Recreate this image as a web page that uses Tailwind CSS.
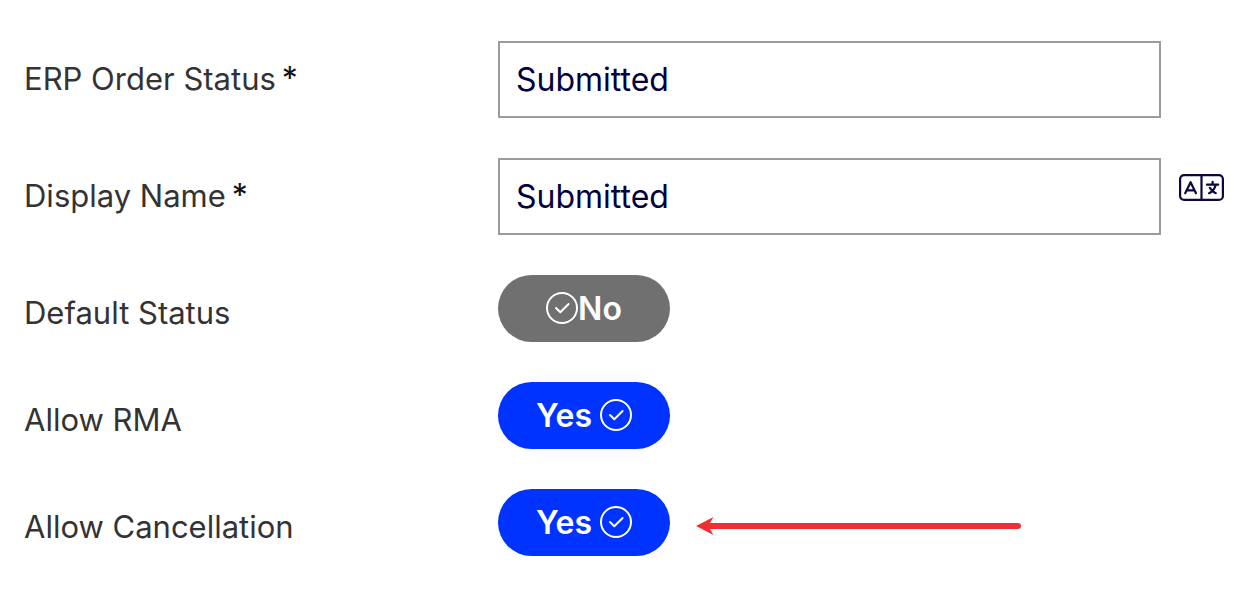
<!DOCTYPE html>
<html lang="en">
<head>
  <meta charset="UTF-8">
  <meta name="viewport" content="width=device-width, initial-scale=1.0">
  <title>ERP Order Status</title>
  <script src="https://cdn.jsdelivr.net/npm/@tailwindcss/browser@4"></script>
</head>
<body class="bg-white font-['Inter',sans-serif] text-[32px] leading-12 text-[#333333]">
  <form class="flex flex-col gap-10 pt-[41px] pr-8 pb-10 pl-6">
    <div class="flex items-start">
      <label for="erpStatus" class="flex w-[39.5%] shrink-0 gap-1.5 pt-3.5 text-[31px]">ERP Order Status<span class="text-[32px] text-[#111111]">*</span></label>
      <div class="flex min-w-0 flex-1 pr-[63px]">
        <input id="erpStatus" type="text" value="Submitted" required class="h-[77px] w-full border-2 border-[#9b9b9b] px-4 text-[#02003d] outline-none focus:border-[#0033ff]">
      </div>
    </div>

    <div class="flex items-start">
      <label for="displayName" class="flex w-[39.5%] shrink-0 gap-1.5 pt-3.5 text-[31px]">Display Name<span class="text-[32px] text-[#111111]">*</span></label>
      <div class="flex min-w-0 flex-1 items-start gap-[18px]">
        <input id="displayName" type="text" value="Submitted" required class="h-[77px] min-w-0 flex-1 border-2 border-[#9b9b9b] px-4 text-[#02003d] outline-none focus:border-[#0033ff]">
        <button type="button" aria-label="Translate" class="mt-4 shrink-0 text-[#0b083f]">
          <svg width="45" height="27" viewBox="0 0 45 27" fill="none" stroke="currentColor" stroke-width="2.2" stroke-linecap="round" stroke-linejoin="round">
            <rect x="1.100" y="1.100" width="42.800" height="24.800" rx="4"/>
            <path d="M22.500 1v25"/>
            <path d="M6.200 19.200L11.600 8.200L17 19.200M8 16.400h7.200"/>
            <path d="M28 10.700h11.200M33.600 7.800v2.900M36.700 11c-1 3.900-3.300 6.700-6.600 8.200M30.800 13.800c1.300 2.500 3.500 4.400 6 5.400"/>
          </svg>
        </button>
      </div>
    </div>

    <div class="flex items-start">
      <span id="defaultLabel" class="w-[39.5%] shrink-0 pt-3.5 text-[31px]">Default Status</span>
      <button type="button" role="switch" aria-checked="false" aria-labelledby="defaultLabel" class="flex h-[67px] w-[172px] items-center justify-center rounded-full bg-[#707070] font-semibold text-white">
        <svg class="mb-0.5" width="32" height="32" viewBox="0 0 32 32" fill="none" stroke="currentColor" stroke-width="2" stroke-linecap="round" stroke-linejoin="round">
          <circle cx="16" cy="16" r="15"/>
          <path d="M10 16l4.300 4.300 8.300-8.300"/>
        </svg>
        <span>No</span>
      </button>
    </div>

    <div class="flex items-start">
      <span id="rmaLabel" class="w-[39.5%] shrink-0 pt-3.5 text-[31px]">Allow RMA</span>
      <button type="button" role="switch" aria-checked="true" aria-labelledby="rmaLabel" class="flex h-[67px] w-[172px] items-center justify-center gap-2 rounded-full bg-[#0033ff] font-semibold text-white">
        <span>Yes</span>
        <svg class="mb-0.5" width="32" height="32" viewBox="0 0 32 32" fill="none" stroke="currentColor" stroke-width="2" stroke-linecap="round" stroke-linejoin="round">
          <circle cx="16" cy="16" r="15"/>
          <path d="M10 16l4.300 4.300 8.300-8.300"/>
        </svg>
      </button>
    </div>

    <div class="flex items-start">
      <span id="cancelLabel" class="w-[39.5%] shrink-0 pt-3.5 text-[31px]">Allow Cancellation</span>
      <button type="button" role="switch" aria-checked="true" aria-labelledby="cancelLabel" class="flex h-[67px] w-[172px] items-center justify-center gap-2 rounded-full bg-[#0033ff] font-semibold text-white">
        <span>Yes</span>
        <svg class="mb-0.5" width="32" height="32" viewBox="0 0 32 32" fill="none" stroke="currentColor" stroke-width="2" stroke-linecap="round" stroke-linejoin="round">
          <circle cx="16" cy="16" r="15"/>
          <path d="M10 16l4.300 4.300 8.300-8.300"/>
        </svg>
      </button>
      <!-- Arrow pointing at the cancellation switch -->
      <svg class="mt-7 ml-[26px] shrink-0" width="325" height="18" viewBox="0 0 325 18" fill="#f03030" aria-hidden="true">
        <path d="M0 9L17.500 0L14 6H322a3 3 0 0 1 0 6H14L17.500 18Z"/>
      </svg>
    </div>
  </form>
</body>
</html>
